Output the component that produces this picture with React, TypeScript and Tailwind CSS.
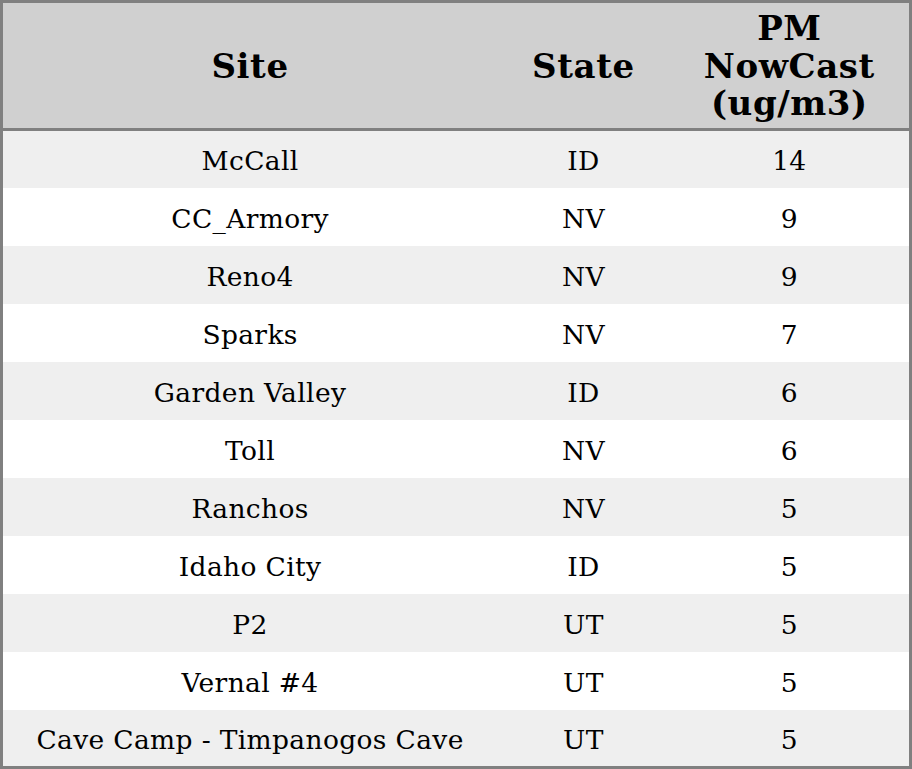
const rows = [
  { site: 'McCall', state: 'ID', pm: 14 },
  { site: 'CC_Armory', state: 'NV', pm: 9 },
  { site: 'Reno4', state: 'NV', pm: 9 },
  { site: 'Sparks', state: 'NV', pm: 7 },
  { site: 'Garden Valley', state: 'ID', pm: 6 },
  { site: 'Toll', state: 'NV', pm: 6 },
  { site: 'Ranchos', state: 'NV', pm: 5 },
  { site: 'Idaho City', state: 'ID', pm: 5 },
  { site: 'P2', state: 'UT', pm: 5 },
  { site: 'Vernal #4', state: 'UT', pm: 5 },
  { site: 'Cave Camp - Timpanogos Cave', state: 'UT', pm: 5 },
]

export default function App() {
  return (
    <div className="w-[912px] bg-white font-['DejaVu_Serif',serif] text-black">
      <table className="w-full border-collapse border-[3px] border-[#808080] table-fixed">
        <colgroup>
          <col className="w-[494px]" />
          <col className="w-[172px]" />
          <col className="w-[240px]" />
        </colgroup>
        <thead>
          <tr className="h-[128px] bg-[#d0d0d0] border-b-[3px] border-[#808080] text-[34px] leading-[37.5px] font-bold tracking-[0.6px]">
            <th className="px-2 pt-0.5 text-center">Site</th>
            <th className="px-2 pt-0.5 text-center">State</th>
            <th className="px-2 pt-0.5 text-center">
              PM
              <br />
              NowCast
              <br />
              (ug/m3)
            </th>
          </tr>
        </thead>
        <tbody>
          {rows.map((r, i) => (
            <tr
              key={r.site}
              className={(i % 2 === 0 ? 'bg-[#efefef]' : 'bg-white') + ' h-[58px] text-[26.5px] tracking-[0.35px]'}
            >
              <td className="pt-1 text-center">{r.site}</td>
              <td className="pt-1 text-center">{r.state}</td>
              <td className="pt-1 text-center">{r.pm}</td>
            </tr>
          ))}
        </tbody>
      </table>
    </div>
  )
}
